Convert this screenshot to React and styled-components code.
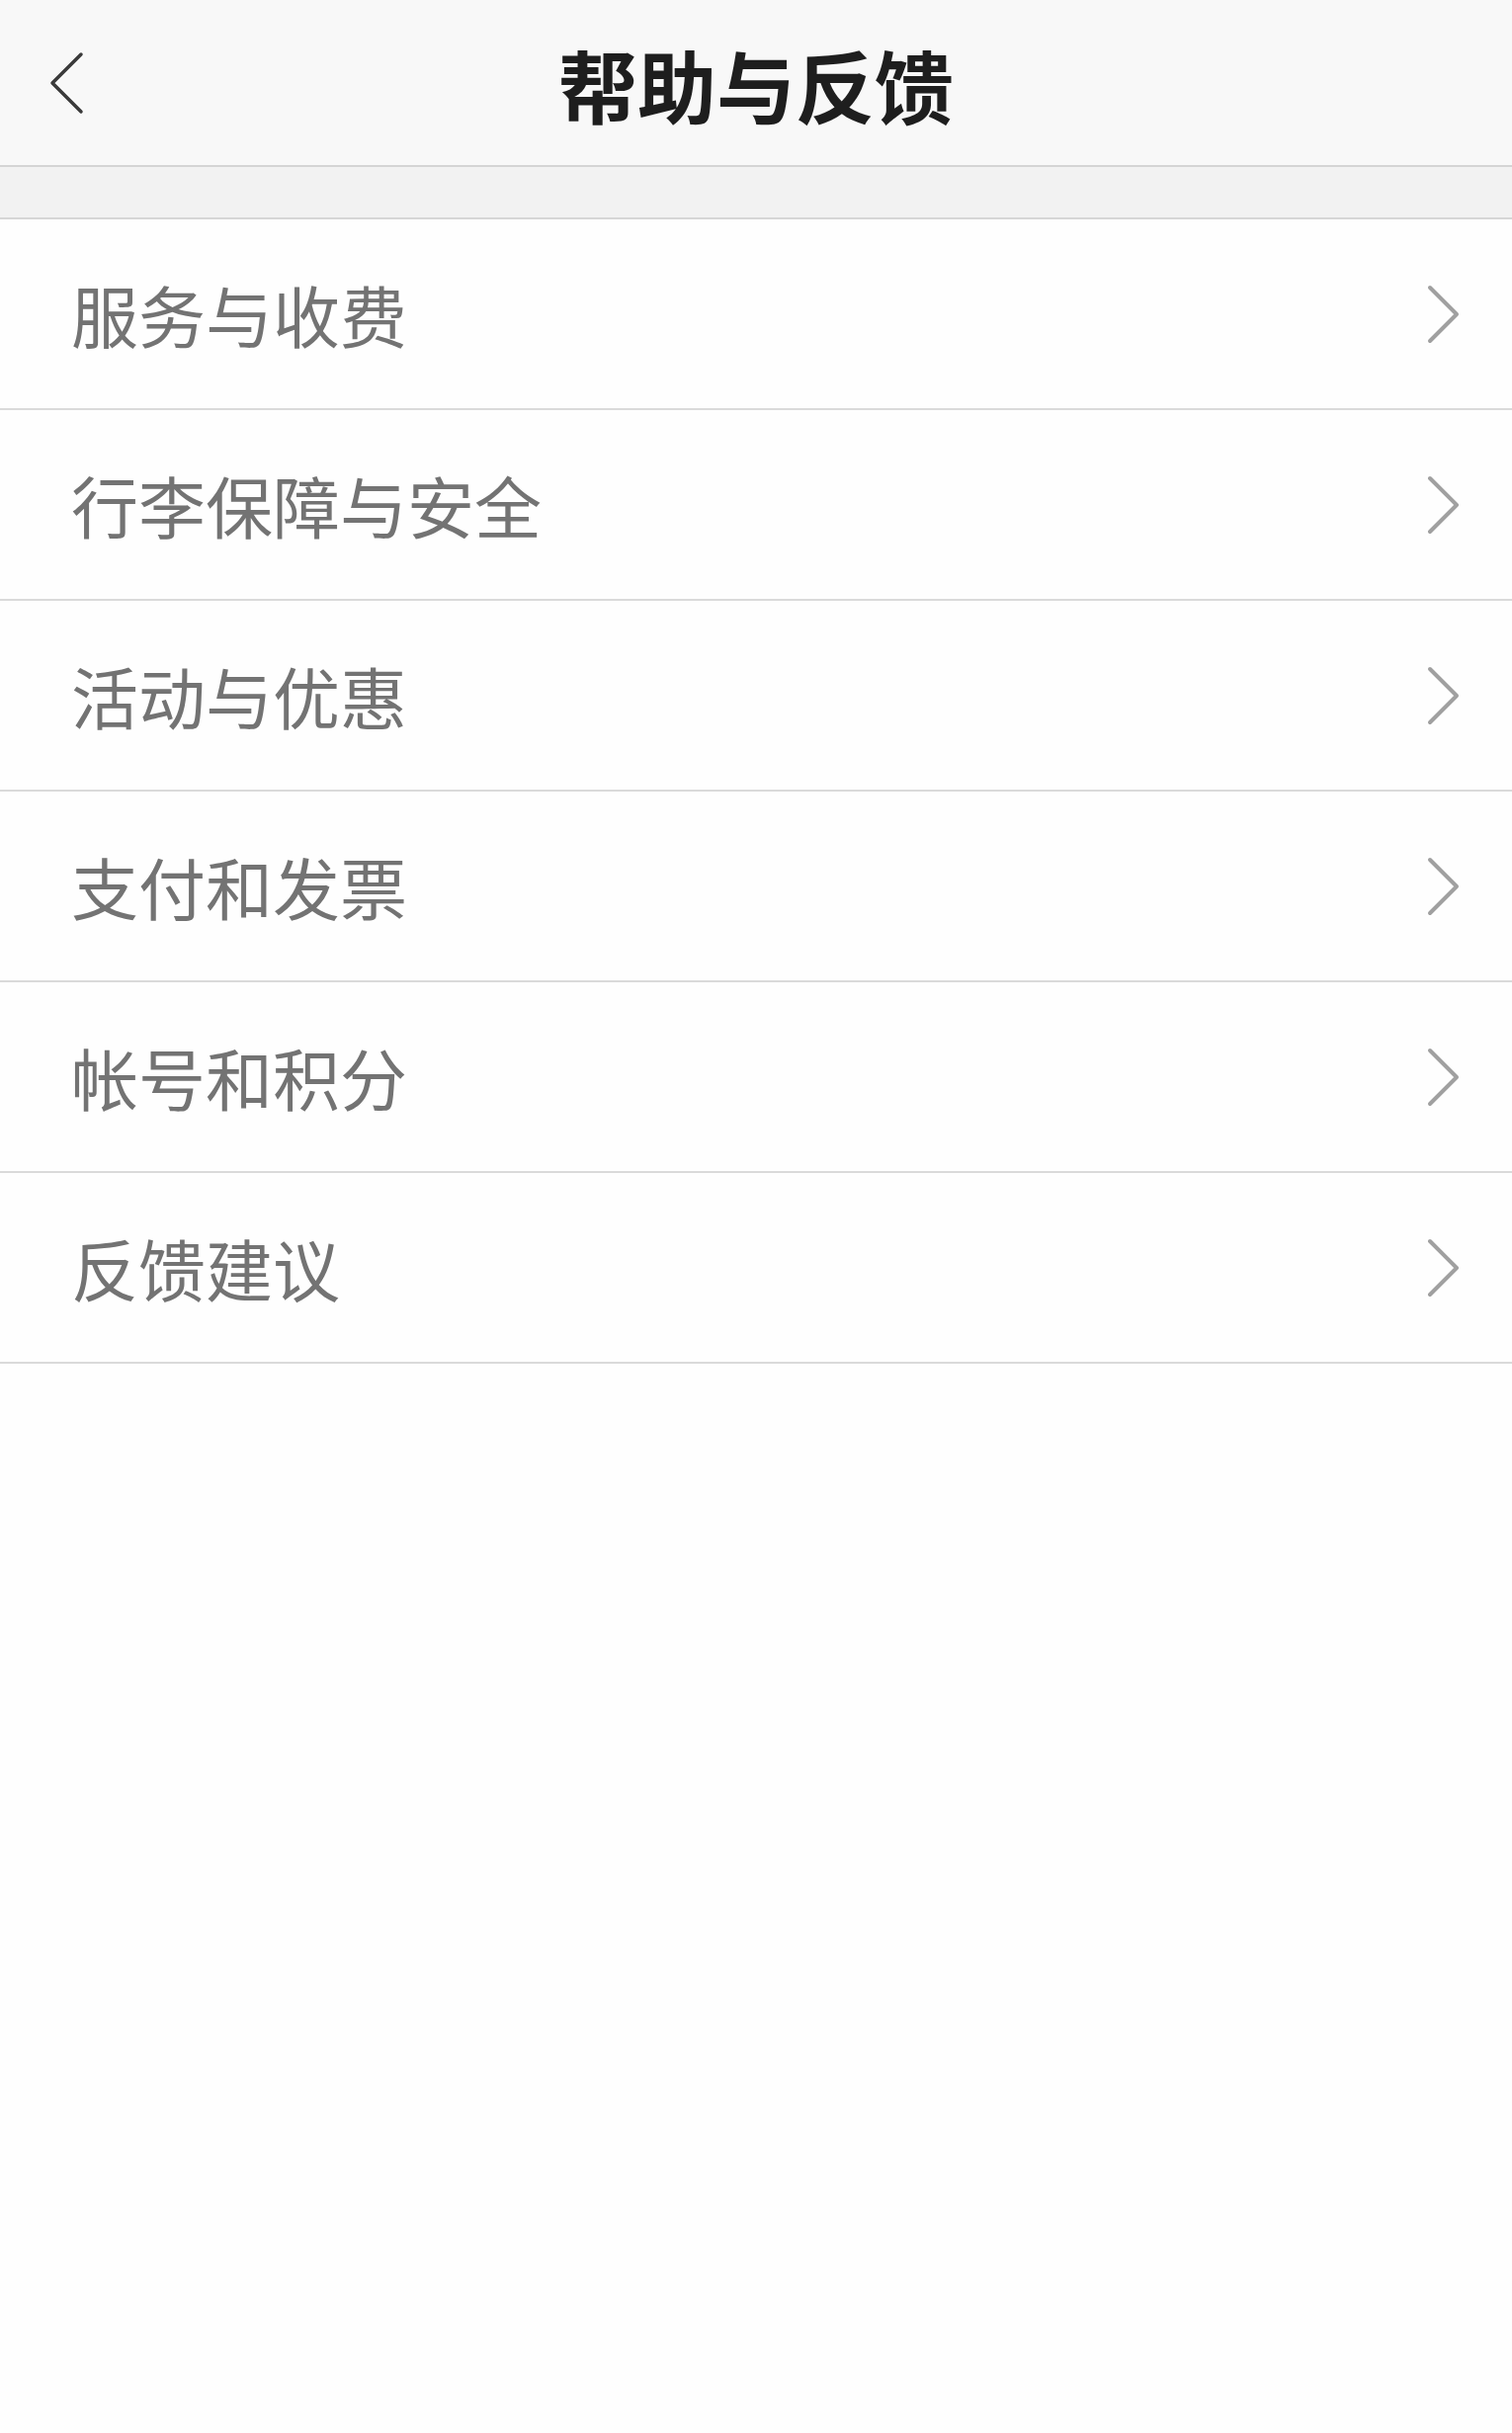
import React from "react";
import styled, { createGlobalStyle } from "styled-components";

const Global = createGlobalStyle`
  html, body {
    margin: 0;
    padding: 0;
    background: #fefefe;
  }
  body {
    font-family: "Noto Sans CJK SC", "Noto Sans", sans-serif;
  }
`;

const Page = styled.div`
  width: 1530px;
  min-height: 2462px;
  background: #fefefe;
  display: flex;
  flex-direction: column;
`;

const Header = styled.header`
  height: 169px;
  box-sizing: border-box;
  background: #f8f8f8;
  border-bottom: 2px solid #d4d4d4;
  display: grid;
  grid-template-columns: 200px 1fr 200px;
  align-items: center;
`;

const BackButton = styled.button`
  border: 0;
  background: none;
  padding: 0 0 0 48px;
  height: 100%;
  display: flex;
  align-items: center;
  cursor: pointer;
`;

const Title = styled.h1`
  margin: 0;
  text-align: center;
  font-size: 80px;
  font-weight: 700;
  color: #1e1e1e;
  letter-spacing: 0;
  line-height: 1;
`;

const Band = styled.div`
  height: 51px;
  background: #f2f2f2;
  border-bottom: 2px solid #d6d6d6;
`;

const List = styled.ul`
  list-style: none;
  margin: 0;
  padding: 0;
`;

const Row = styled.li`
  height: 193px;
  box-sizing: border-box;
  border-bottom: 2px solid #dadada;
  display: flex;
  align-items: center;
  justify-content: space-between;
  padding: 0 51px 0 72px;
  background: #fefefe;
`;

const Label = styled.span`
  font-size: 68px;
  color: #737373;
  line-height: 1;
`;

const Chevron = ({ color = "#a0a0a0", w = 36, h = 62, sw = 4 }) => (
  <svg width={w} height={h} viewBox={`0 0 ${w} ${h}`} fill="none">
    <path
      d={`M4 4 L${w - 5} ${h / 2} L4 ${h - 4}`}
      stroke={color}
      strokeWidth={sw}
      strokeLinecap="round"
      strokeLinejoin="round"
    />
  </svg>
);

const BackIcon = () => (
  <svg width="40" height="64" viewBox="0 0 40 64" fill="none">
    <path
      d="M34 3 L5 32 L34 61"
      stroke="#3a3a3a"
      strokeWidth="3.5"
      strokeLinecap="round"
      strokeLinejoin="round"
    />
  </svg>
);

const items = [
  "服务与收费",
  "行李保障与安全",
  "活动与优惠",
  "支付和发票",
  "帐号和积分",
  "反馈建议",
];

export default function App() {
  return (
    <Page>
      <Global />
      <Header>
        <BackButton aria-label="返回">
          <BackIcon />
        </BackButton>
        <Title>帮助与反馈</Title>
        <div />
      </Header>
      <Band />
      <List>
        {items.map((t) => (
          <Row key={t}>
            <Label>{t}</Label>
            <Chevron />
          </Row>
        ))}
      </List>
    </Page>
  );
}
